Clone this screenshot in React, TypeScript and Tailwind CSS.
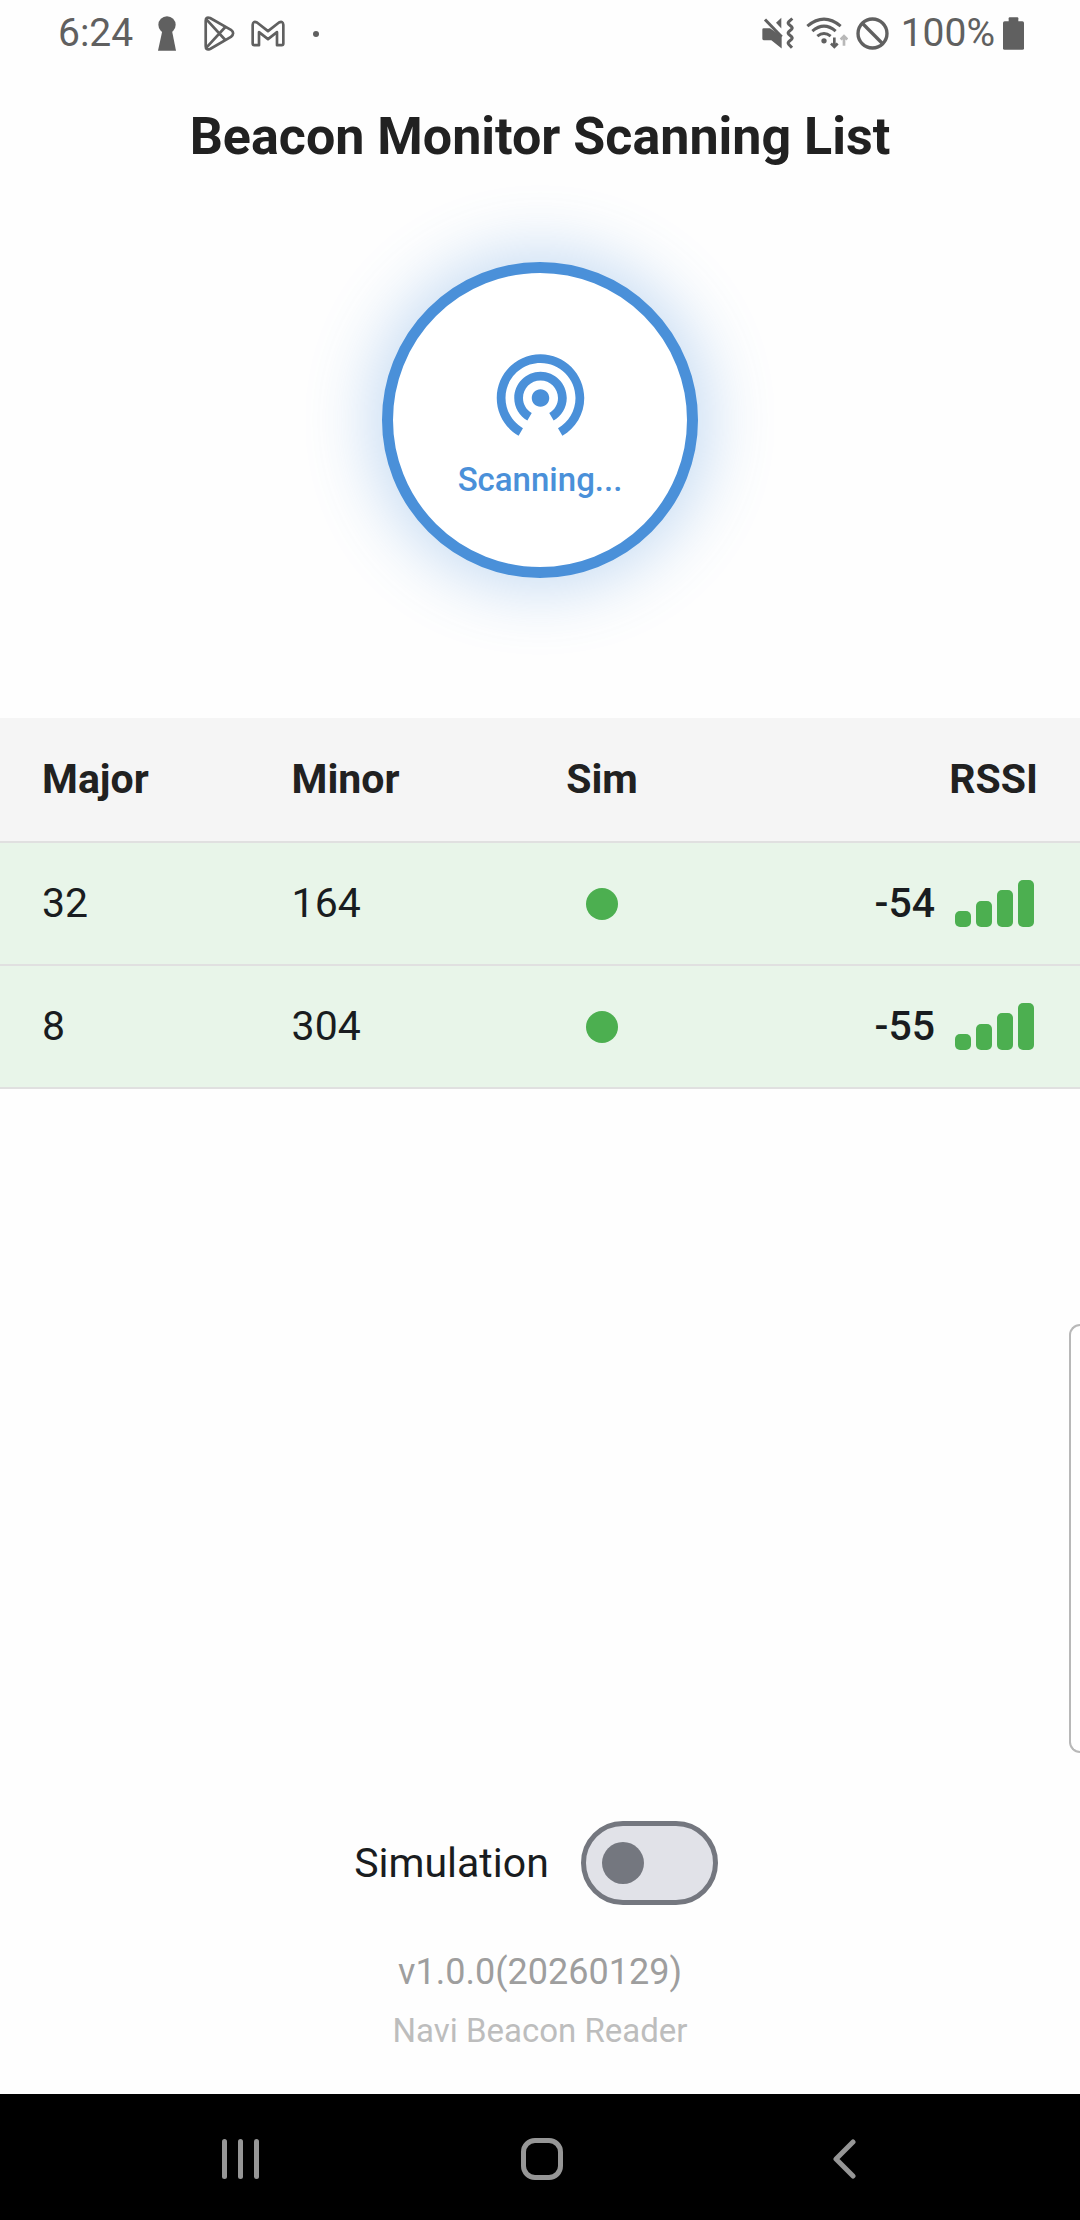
import React, { useState } from 'react';
import { clsx } from 'clsx';

interface Beacon {
  major: number;
  minor: number;
  simulated: boolean;
  rssi: number;
}

const beacons: Beacon[] = [
  { major: 32, minor: 164, simulated: true, rssi: -54 },
  { major: 8, minor: 304, simulated: true, rssi: -55 },
];

const StatusBar: React.FC = () => (
  <div className="flex h-16 items-center justify-between pl-[58px] pr-14 pt-[3px] text-[#606060]">
    <div className="flex items-center">
      <span className="w-[76px] text-[39px] leading-none">6:24</span>

      {/* Keyhole */}
      <svg className="ml-6 h-[35px] w-[18px]" viewBox="0 0 54 104" fill="currentColor">
        <circle cx="27" cy="26" r="26" />
        <path d="M13 44 L0 104 H54 L42 44 Z" />
      </svg>

      {/* Play store */}
      <svg className="ml-7 h-[35px] w-[31px]" viewBox="0 0 92 104" fill="none" stroke="currentColor" strokeWidth="8" strokeLinejoin="round">
        <path d="M5 14 Q5 1 18 6 L80 41 Q93 51 80 62 L18 98 Q5 103 5 90 Z" />
        <path d="M7 10 L64 72 M7 94 L64 32" />
      </svg>

      {/* Gmail */}
      <svg className="ml-4 h-[27px] w-[34px]" viewBox="0 0 102 80" fill="none" stroke="currentColor" strokeWidth="8" strokeLinejoin="round">
        <path d="M5 14 Q6 1 18 7 L51 33 L84 7 Q96 1 97 14 V70 Q97 75 92 75 H78 V36 L51 57 L24 36 V75 H10 Q5 75 5 70 Z" />
      </svg>

      <span className="ml-7 size-[6px] rounded-full bg-current" />
    </div>

    <div className="flex items-center">
      {/* Vibrate / muted */}
      <svg className="h-[33px] w-[32px]" viewBox="0 0 96 98" fill="currentColor">
        <path d="M5 33 H24 L59 57 V94 L28 69 H5 Q1 69 1 65 V37 Q1 33 5 33 Z" />
        <path d="M42 17 L58 2 V34 Z" />
        <path d="M9 7 L59 59" stroke="currentColor" strokeWidth="9" fill="none" />
        <path d="M91 4 L80 14 Q77 18 80 21 L89 29 Q92 33 89 36 L80 44 Q77 48 80 51 L89 59 Q92 63 89 66 L80 74 Q77 78 80 81 L90 92" stroke="currentColor" strokeWidth="9" fill="none" />
      </svg>

      {/* Wifi with traffic arrows */}
      <svg className="ml-3 h-[33px] w-[42px]" viewBox="0 0 126 98" fill="none" stroke="currentColor" strokeWidth="9">
        <path d="M4 27 Q54 -15 104 27" />
        <path d="M19 42 Q54 12 89 42" />
        <path d="M34 57 Q54 41 74 57" />
        <circle cx="54" cy="71" r="8" fill="currentColor" stroke="none" />
        <path d="M85 61 V88 M75 79 L85 89 L95 79" strokeWidth="8" />
        <path d="M114 86 V58 M104 67 L114 57 L124 67" strokeWidth="8" className="text-[#b8b8b8]" stroke="currentColor" />
      </svg>

      {/* Blocked */}
      <svg className="ml-2 size-[33px]" viewBox="0 0 98 98" fill="none" stroke="currentColor" strokeWidth="10">
        <circle cx="49" cy="49" r="43" />
        <path d="M18 18 L80 80" />
      </svg>

      <span className="ml-3 text-[39px] leading-none">100%</span>

      {/* Battery */}
      <svg className="ml-2 h-[33px] w-[21px]" viewBox="0 0 63 98" fill="currentColor">
        <rect x="17" y="0" width="29" height="20" rx="3" />
        <rect x="0" y="12" width="63" height="86" rx="5" />
      </svg>
    </div>
  </div>
);

const SignalBars: React.FC = () => (
  <div className="mr-1 flex items-end gap-[5px]">
    <span className="h-[16px] w-[16px] rounded-[5px] bg-[#4caf50]" />
    <span className="h-[26px] w-[16px] rounded-[5px] bg-[#4caf50]" />
    <span className="h-[37px] w-[16px] rounded-[5px] bg-[#4caf50]" />
    <span className="h-[47px] w-[16px] rounded-[5px] bg-[#4caf50]" />
  </div>
);

const ScanIndicator: React.FC<{ scanning: boolean; onClick: () => void }> = ({ scanning, onClick }) => (
  <button
    type="button"
    onClick={onClick}
    className="flex size-[316px] flex-col items-center justify-center gap-[14px] rounded-full border-[11px] border-[#4a90d9] bg-white text-[#4a90d9] shadow-[0_0_64px_12px_rgba(74,144,217,0.3)]"
  >
    <svg className="size-[105px]" viewBox="0 0 24 24" fill="currentColor">
      <path d="M12 11c-1.1 0-2 .9-2 2s.9 2 2 2 2-.9 2-2-.9-2-2-2zm6 2c0-3.31-2.69-6-6-6s-6 2.69-6 6c0 2.22 1.21 4.15 3 5.19l1-1.74c-1.19-.7-2-1.97-2-3.45 0-2.21 1.79-4 4-4s4 1.79 4 4c0 1.48-.81 2.75-2 3.45l1 1.74c1.79-1.04 3-2.97 3-5.19zM12 3C6.48 3 2 7.48 2 13c0 3.7 2.01 6.92 4.99 8.65l1-1.73C5.61 18.53 4 15.96 4 13c0-4.42 3.58-8 8-8s8 3.58 8 8c0 2.96-1.61 5.53-4 6.92l1 1.73c2.99-1.73 5-4.95 5-8.65 0-5.52-4.48-10-10-10z" />
    </svg>
    <span className="text-[33px] font-medium leading-10">{scanning ? 'Scanning...' : 'Start'}</span>
  </button>
);

const BeaconTable: React.FC<{ rows: Beacon[] }> = ({ rows }) => (
  <table className="w-full table-fixed text-[41px] leading-none text-[#191c20]">
    <thead>
      <tr className="h-[124px] border-b-2 border-[#e0e0e0] bg-[#f5f5f5] text-left text-[#212121]">
        <th className="w-[27%] pl-[42px] font-bold">Major</th>
        <th className="w-[23%] font-bold">Minor</th>
        <th className="w-[124px] text-center font-bold">Sim</th>
        <th className="pr-[42px] text-right font-bold">RSSI</th>
      </tr>
    </thead>
    <tbody>
      {rows.map((beacon) => (
        <tr key={`${beacon.major}-${beacon.minor}`} className="h-[123px] border-b-2 border-[#e0e0e0] bg-[#e8f5e9]">
          <td className="pl-[42px]">{beacon.major}</td>
          <td>{beacon.minor}</td>
          <td>
            <div className={clsx('mx-auto size-8 rounded-full', beacon.simulated ? 'bg-[#4caf50]' : 'bg-gray-400')} />
          </td>
          <td className="pr-[42px]">
            <div className="flex items-center justify-end gap-5">
              <span className="font-medium">{beacon.rssi}</span>
              <SignalBars />
            </div>
          </td>
        </tr>
      ))}
    </tbody>
  </table>
);

const NavigationBar: React.FC = () => (
  <nav className="flex h-[126px] items-center justify-center gap-[218px] bg-black pl-1 pt-1 text-[#969696]">
    <button type="button" aria-label="Recent apps" className="flex w-[84px] justify-center gap-[11px]">
      <span className="h-10 w-[5px] rounded-full bg-current" />
      <span className="h-10 w-[5px] rounded-full bg-current" />
      <span className="h-10 w-[5px] rounded-full bg-current" />
    </button>
    <button type="button" aria-label="Home" className="flex w-[84px] justify-center">
      <span className="size-[42px] rounded-[14px] border-[5px] border-current" />
    </button>
    <button type="button" aria-label="Back" className="flex w-[84px] justify-center">
      <svg className="h-10 w-6" viewBox="0 0 24 40" fill="none" stroke="currentColor" strokeWidth="5" strokeLinecap="round" strokeLinejoin="round">
        <path d="M21 3 L4 20 L21 37" />
      </svg>
    </button>
  </nav>
);

const App: React.FC = () => {
  const [scanning, setScanning] = useState(true);
  const [simulation, setSimulation] = useState(false);

  return (
    <div className="relative flex min-h-screen flex-col bg-[#fefefe] font-['Roboto',sans-serif] text-[#191c20]">
      <StatusBar />

      <header className="flex h-[146px] items-center justify-center">
        <h1 className="text-[52px] font-bold leading-none text-[#212121]">Beacon Monitor Scanning List</h1>
      </header>

      <main className="flex flex-1 flex-col">
        <div className="flex justify-center pb-[140px] pt-[52px]">
          <ScanIndicator scanning={scanning} onClick={() => setScanning(!scanning)} />
        </div>
        <BeaconTable rows={beacons} />
      </main>

      <footer className="flex flex-col items-center pb-[43px]">
        <div className="flex items-center gap-8 pr-2">
          <label htmlFor="simulation" className="text-[41px] leading-none">Simulation</label>
          <input
            id="simulation"
            type="checkbox"
            role="switch"
            checked={simulation}
            onChange={(e) => setSimulation(e.target.checked)}
            className="flex h-[84px] w-[137px] appearance-none items-center rounded-full border-[5px] border-[#74777f] bg-[#e1e2e8] px-4 before:size-[42px] before:rounded-full before:bg-[#74777f] checked:justify-end checked:border-[#4a90d9] checked:before:bg-[#4a90d9]"
          />
        </div>
        <p className="mt-[43px] text-[36px] leading-[48px] text-[#9e9e9e]">v1.0.0(20260129)</p>
        <p className="mt-[15px] text-[33px] leading-10 text-[#bdbdbd]">Navi Beacon Reader</p>
      </footer>

      <NavigationBar />

      {/* Edge panel handle */}
      <div className="absolute right-0 top-[1324px] h-[429px] w-[11px] rounded-l-[16px] border-2 border-r-0 border-[#b8b8b8] bg-white" />
    </div>
  );
};

export default App;
